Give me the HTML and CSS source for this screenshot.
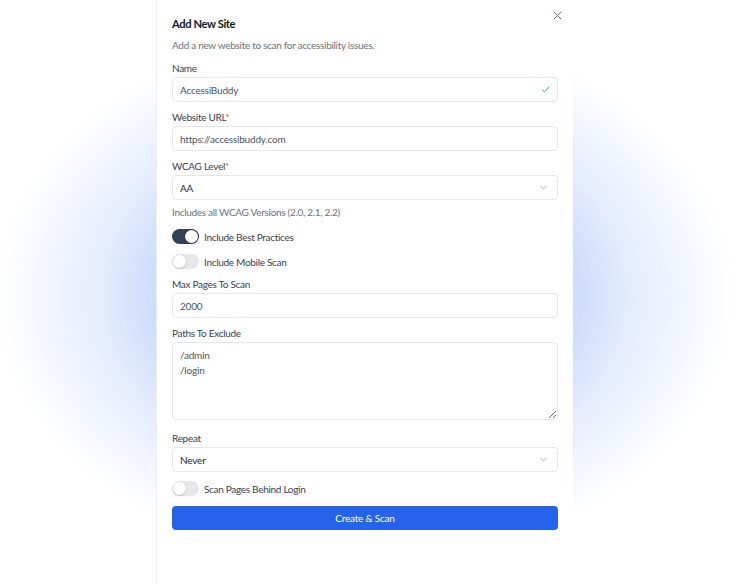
FILE: index.html
```html
<!DOCTYPE html>
<html lang="en">

<head>
    <meta charset="UTF-8">
    <meta name="viewport" content="width=device-width, initial-scale=1.0">
    <title>Add New Site</title>
    <link rel="stylesheet" href="styles.css">
</head>

<body>
    <div class="glow"></div>

    <div class="panel">
        <button class="close-button" aria-label="Close">
            <svg width="9" height="9" viewBox="0 0 9 9">
                <path d="M1 1 L8 8 M8 1 L1 8" stroke="#6b7280" stroke-width="1" stroke-linecap="round" />
            </svg>
        </button>

        <h2 class="panel-title">Add New Site</h2>
        <p class="panel-description">Add a new website to scan for accessibility issues.</p>

        <form class="site-form">
            <div class="field">
                <label class="field-label">Name</label>
                <div class="input-wrap">
                    <input class="input" type="text" value="AccessiBuddy">
                    <svg class="input-icon" width="9" height="9" viewBox="0 0 9 9">
                        <path d="M1.2 4.8 L3.5 6.9 L7.8 2.3" fill="none" stroke="#22c55e" stroke-width="1" stroke-linecap="round" stroke-linejoin="round" />
                    </svg>
                </div>
            </div>

            <div class="field">
                <label class="field-label">Website URL<span class="required">*</span></label>
                <input class="input" type="text" value="https://accessibuddy.com">
            </div>

            <div class="field">
                <label class="field-label">WCAG Level<span class="required">*</span></label>
                <div class="select">
                    <span class="select-value">AA</span>
                    <svg width="9" height="9" viewBox="0 0 9 9">
                        <path d="M1.8 3.3 L4.5 5.8 L7.2 3.3" fill="none" stroke="#9ca3af" stroke-width="0.9" stroke-linecap="round" stroke-linejoin="round" />
                    </svg>
                </div>
                <div class="field-hint">Includes all WCAG Versions (2.0, 2.1, 2.2)</div>
            </div>

            <div class="toggles">
                <label class="toggle-row">
                    <span class="toggle on"><span class="knob"></span></span>
                    Include Best Practices
                </label>
                <label class="toggle-row">
                    <span class="toggle"><span class="knob"></span></span>
                    Include Mobile Scan
                </label>
            </div>

            <div class="field">
                <label class="field-label">Max Pages To Scan</label>
                <input class="input" type="text" value="2000">
            </div>

            <div class="field">
                <label class="field-label">Paths To Exclude</label>
                <textarea class="textarea">/admin
/login</textarea>
            </div>

            <div class="field">
                <label class="field-label">Repeat</label>
                <div class="select">
                    <span class="select-value">Never</span>
                    <svg width="9" height="9" viewBox="0 0 9 9">
                        <path d="M1.8 3.3 L4.5 5.8 L7.2 3.3" fill="none" stroke="#9ca3af" stroke-width="0.9" stroke-linecap="round" stroke-linejoin="round" />
                    </svg>
                </div>
            </div>

            <label class="toggle-row login-row">
                <span class="toggle"><span class="knob"></span></span>
                Scan Pages Behind Login
            </label>

            <button type="button" class="submit-button">Create &amp; Scan</button>
        </form>
    </div>
</body>

</html>
```

FILE: styles.css
```css
* {
    margin: 0;
    padding: 0;
    box-sizing: border-box;
}

body {
    background: #ffffff;
    font-family: Lato, "Noto Sans", sans-serif;
    font-size: 10px;
    letter-spacing: -0.3px;
    color: #374151;
    height: 100vh;
    overflow: hidden;
    position: relative;
}

.glow {
    position: absolute;
    left: 0;
    top: 0;
    width: 730px;
    height: 584px;
    background: radial-gradient(ellipse 370px 270px at 365px 295px,
            rgba(37, 99, 235, 0.42) 0%,
            rgba(37, 99, 235, 0.3) 45%,
            rgba(37, 99, 235, 0.12) 72%,
            rgba(37, 99, 235, 0) 100%);
    pointer-events: none;
}

.panel {
    position: relative;
    margin-left: 156px;
    width: 417px;
    height: 100vh;
    background: #ffffff;
    border-left: 1px solid #eceef2;
    padding: 16px 15px 0 15px;
}

.close-button {
    position: absolute;
    top: 11px;
    right: 11px;
    width: 9px;
    height: 9px;
    border: none;
    background: none;
    display: flex;
}

.panel-title {
    font-size: 11.2px;
    letter-spacing: -0.4px;
    font-weight: 700;
    color: #111827;
    line-height: 16px;
    margin-bottom: 5px;
}

.panel-description {
    color: #6b7280;
    line-height: 16px;
    margin-bottom: 5px;
}

.site-form {
    display: flex;
    flex-direction: column;
    gap: 5px;
}

.field {
    display: flex;
    flex-direction: column;
}

.field-label {
    color: #374151;
    line-height: 16px;
    padding-top: 2px;
    margin-bottom: 1px;
}

.required {
    color: #ef4444;
}

.input-wrap {
    position: relative;
}

.input,
.select,
.textarea {
    width: 100%;
    height: 25px;
    border: 1px solid #e5e7eb;
    border-radius: 4px;
    background: #ffffff;
    font-family: inherit;
    font-size: 10px;
    letter-spacing: -0.2px;
    color: #4b5563;
    padding: 0 7px;
    outline: none;
}

.input-icon {
    position: absolute;
    right: 8px;
    top: 8px;
}

.select {
    display: flex;
    align-items: center;
    justify-content: space-between;
    padding-right: 9px;
    color: #1f2937;
}

.textarea {
    display: block;
    height: 78px;
    padding: 5px 7px;
    line-height: 15px;
    margin-bottom: 3px;
    resize: vertical;
}

.field-hint {
    color: #6b7280;
    line-height: 16px;
    margin-top: 4px;
}

.toggles {
    display: flex;
    flex-direction: column;
    gap: 10px;
    margin-top: 4px;
}

.toggle-row {
    display: flex;
    align-items: center;
    gap: 5px;
    color: #374151;
    height: 15px;
}

.toggle {
    position: relative;
    width: 27px;
    height: 15px;
    border-radius: 8px;
    background: #e5e7eb;
    flex-shrink: 0;
}

.toggle .knob {
    position: absolute;
    top: 1px;
    left: 1px;
    width: 13px;
    height: 13px;
    border-radius: 50%;
    background: #ffffff;
    box-shadow: 0 1px 2px rgba(0, 0, 0, 0.2);
}

.toggle.on {
    background: #334155;
}

.toggle.on .knob {
    left: 13px;
    box-shadow: 0 0 0 0.5px #1e293b;
}

.login-row {
    margin-top: 4px;
}

.submit-button {
    margin-top: 5px;
    height: 24px;
    border: none;
    border-radius: 4px;
    background: #2563eb;
    color: #ffffff;
    font-family: inherit;
    font-size: 10px;
    letter-spacing: -0.2px;
}
```
